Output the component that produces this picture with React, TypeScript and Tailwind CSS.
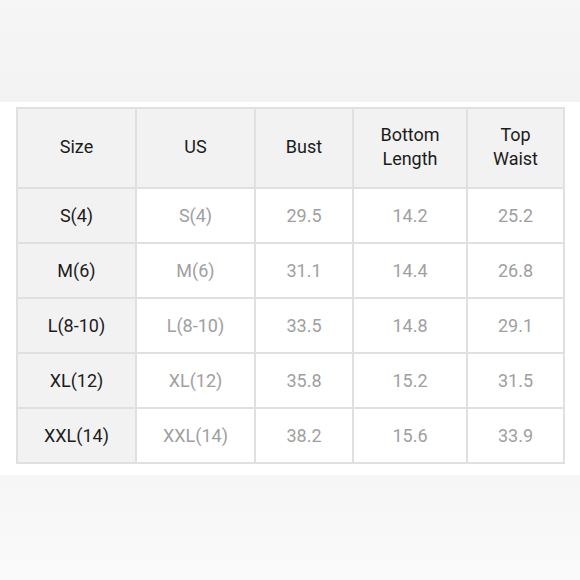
import React from "react";

interface SizeRow {
  size: string,
  us: string,
  bust: string,
  bottom: string,
  waist: string,
}

const rows: SizeRow[] = [
  { size: "S(4)", us: "S(4)", bust: "29.5", bottom: "14.2", waist: "25.2" },
  { size: "M(6)", us: "M(6)", bust: "31.1", bottom: "14.4", waist: "26.8" },
  { size: "L(8-10)", us: "L(8-10)", bust: "33.5", bottom: "14.8", waist: "29.1" },
  { size: "XL(12)", us: "XL(12)", bust: "35.8", bottom: "15.2", waist: "31.5" },
  { size: "XXL(14)", us: "XXL(14)", bust: "38.2", bottom: "15.6", waist: "33.9" },
];

function HeadCell({ children }: { children: React.ReactNode }) {
  return (
    <div className="flex items-center justify-center bg-[#f2f2f2] pb-[2px] text-center text-[18px] leading-[24px] text-[#1c1c1c]">
      {children}
    </div>
  );
}

function App() {
  return (
    <div className="flex flex-col w-[580px] h-[580px] bg-white font-['Roboto',sans-serif]">
      <div className="h-[102px] bg-gradient-to-b from-[#f6f6f6] to-[#f2f2f2]" />
      <div className="h-[373px] bg-white pt-[5px] pl-[16px]">
        <div className="grid grid-cols-[117px_117px_96px_112px_95px] grid-rows-[78px_repeat(5,53px)] gap-[2px] p-[2px] bg-[#e0e0e0] w-fit">
          <HeadCell>Size</HeadCell>
          <HeadCell>US</HeadCell>
          <HeadCell>Bust</HeadCell>
          <HeadCell>Bottom<br />Length</HeadCell>
          <HeadCell>Top<br />Waist</HeadCell>
          {rows.map((row) => (
            <React.Fragment key={row.size}>
              <div className="flex items-center justify-center bg-[#f2f2f2] pb-[1px] text-[18px] text-[#1c1c1c]">{row.size}</div>
              <div className="flex items-center justify-center bg-white pb-[1px] text-[18px] text-[#a0a0a0]">{row.us}</div>
              <div className="flex items-center justify-center bg-white pb-[1px] text-[18px] text-[#a0a0a0]">{row.bust}</div>
              <div className="flex items-center justify-center bg-white pb-[1px] text-[18px] text-[#a0a0a0]">{row.bottom}</div>
              <div className="flex items-center justify-center bg-white pb-[1px] text-[18px] text-[#a0a0a0]">{row.waist}</div>
            </React.Fragment>
          ))}
        </div>
      </div>
      <div className="flex-1 bg-gradient-to-b from-[#f6f6f6] to-[#fafafa]" />
    </div>
  );
}

export default App;
